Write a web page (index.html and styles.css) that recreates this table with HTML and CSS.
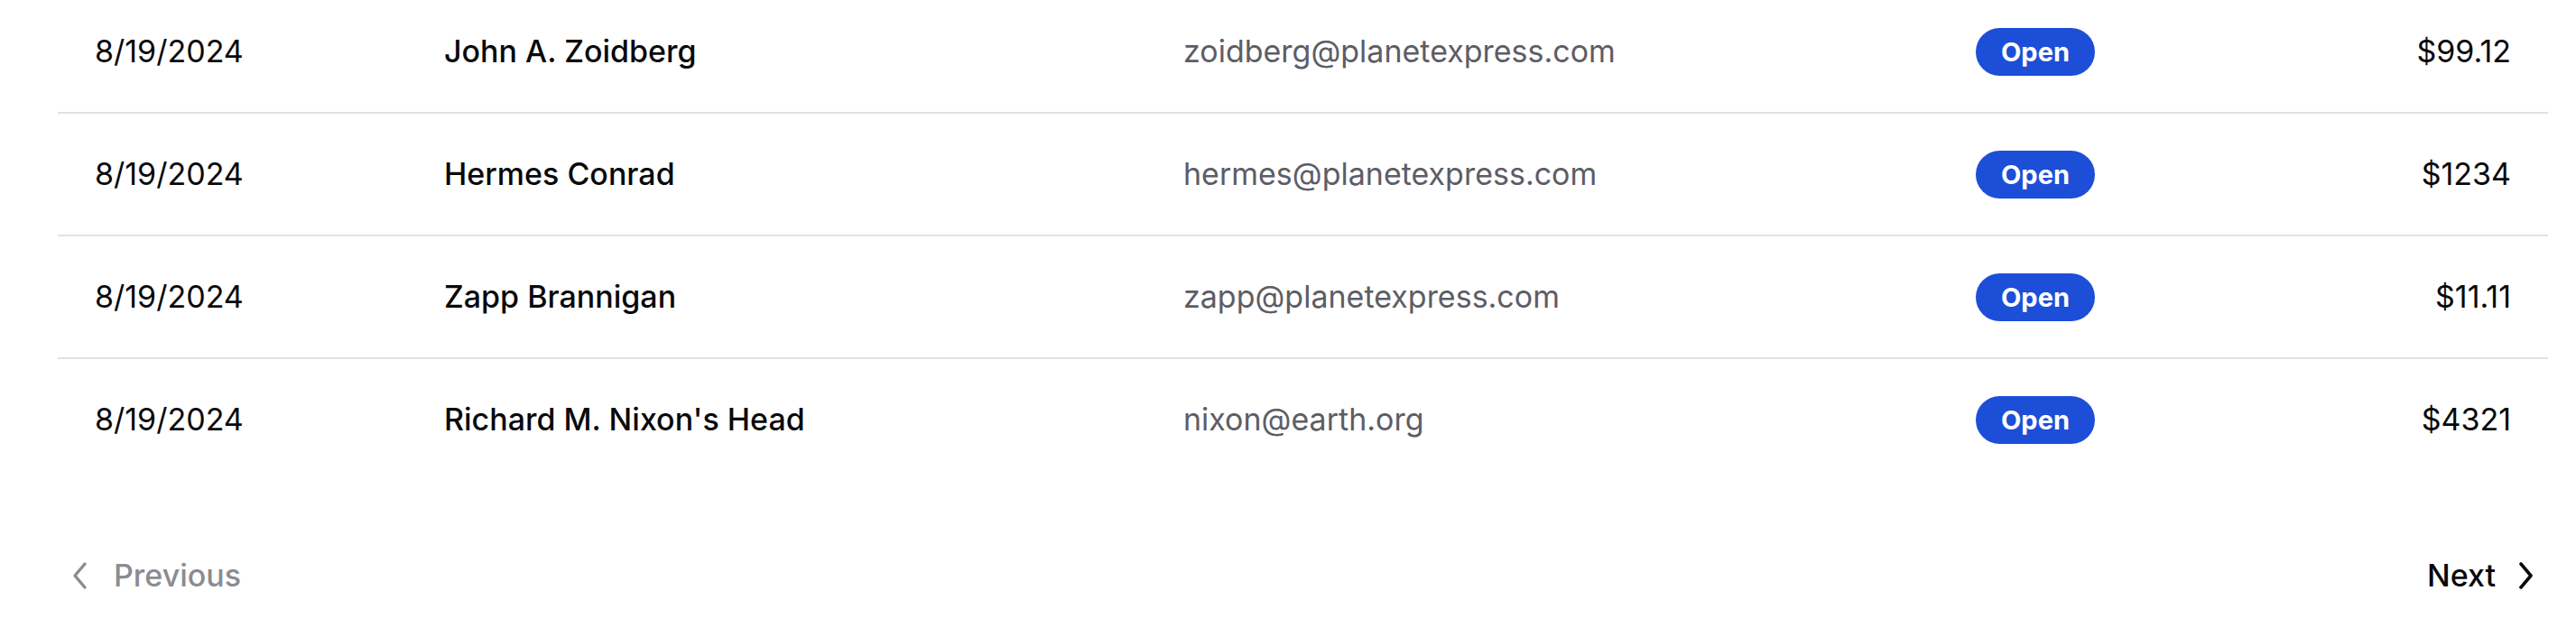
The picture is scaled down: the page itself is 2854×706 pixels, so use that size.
FILE: index.html
```html
<!DOCTYPE html>
<html lang="en">
<head>
<meta charset="utf-8">
<title>Orders</title>
<link rel="stylesheet" href="styles.css">
</head>
<body>
<div class="table">
  <div class="row">
    <div class="cell date">8/19/2024</div>
    <div class="cell name">John A. Zoidberg</div>
    <div class="cell email">zoidberg@planetexpress.com</div>
    <div class="cell"><span class="badge">Open</span></div>
    <div class="cell amount">$99.12</div>
  </div>
  <div class="row">
    <div class="cell date">8/19/2024</div>
    <div class="cell name">Hermes Conrad</div>
    <div class="cell email">hermes@planetexpress.com</div>
    <div class="cell"><span class="badge">Open</span></div>
    <div class="cell amount">$1234</div>
  </div>
  <div class="row">
    <div class="cell date">8/19/2024</div>
    <div class="cell name">Zapp Brannigan</div>
    <div class="cell email">zapp@planetexpress.com</div>
    <div class="cell"><span class="badge">Open</span></div>
    <div class="cell amount">$11.11</div>
  </div>
  <div class="row">
    <div class="cell date">8/19/2024</div>
    <div class="cell name">Richard M. Nixon's Head</div>
    <div class="cell email">nixon@earth.org</div>
    <div class="cell"><span class="badge">Open</span></div>
    <div class="cell amount">$4321</div>
  </div>
</div>
<nav class="pager">
  <a class="pager-btn prev">
    <svg class="chev" width="18" height="34" viewBox="0 0 18 34" fill="none"><polyline points="14,4 3,17 14,30" stroke="currentColor" stroke-width="3.4" stroke-linecap="round" stroke-linejoin="round"/></svg>
    <span>Previous</span>
  </a>
  <a class="pager-btn next">
    <span>Next</span>
    <svg class="chev" width="18" height="34" viewBox="0 0 18 34" fill="none"><polyline points="4,4 15,17 4,30" stroke="currentColor" stroke-width="3.6" stroke-linecap="round" stroke-linejoin="round"/></svg>
  </a>
</nav>
</body>
</html>
```

FILE: styles.css
```css
html, body {
  margin: 0;
  padding: 0;
  background: #ffffff;
}

body {
  font-family: Inter, "Noto Sans", "Liberation Sans", sans-serif;
  font-size: 34px;
  line-height: 48px;
  color: #09090b;
  overflow: hidden;
}

.table {
  margin: -10px 31px 0 64px;
}

.row {
  display: grid;
  grid-template-columns: 387px 819px 878px 1fr 300px;
  height: 134px;
  align-items: center;
  border-bottom: 2px solid #e1e1e5;
}

.row:last-child {
  border-bottom: none;
}

.cell {
  padding-left: 41px;
  white-space: nowrap;
}

.name {
  font-weight: 500;
}

.email {
  color: #5d5d66;
}

.amount {
  padding-left: 0;
  padding-right: 41px;
  text-align: right;
}

.badge {
  display: inline-flex;
  align-items: center;
  justify-content: center;
  height: 53px;
  padding: 0 28px;
  border-radius: 27px;
  background: #1d4ed8;
  color: #ffffff;
  font-size: 29px;
  font-weight: 700;
  line-height: 1;
}

.pager {
  display: flex;
  justify-content: space-between;
  align-items: center;
  height: 72px;
  margin: 70px 31px 0 64px;
}

.pager-btn {
  display: flex;
  align-items: center;
  font-weight: 500;
}

.prev {
  color: #8b8b93;
  padding-left: 16px;
  gap: 28px;
}

.next {
  color: #09090b;
  padding-right: 16px;
  gap: 24px;
}

.chev {
  display: block;
}
```
